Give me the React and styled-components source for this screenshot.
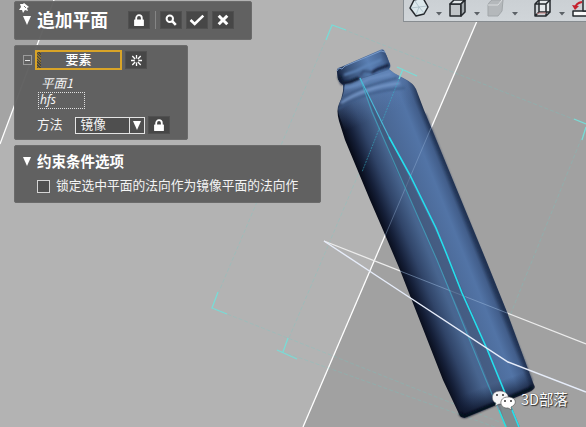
import React from "react";
import styled, { createGlobalStyle } from "styled-components";

const GlobalStyle = createGlobalStyle`
  * { box-sizing: border-box; }
  body {
    margin: 0;
    overflow: hidden;
    font-family: "Noto Sans CJK SC", "Noto Sans", sans-serif;
    color: #f4f4f4;
  }
`;

const Viewport = styled.main`
  position: relative;
  display: flex;
  justify-content: space-between;
  align-items: flex-start;
  width: 586px;
  height: 427px;
  overflow: hidden;
  background: #b3b3b3;
`;

const SceneCanvas = styled.svg`
  position: absolute;
  inset: 0;
  width: 586px;
  height: 427px;
`;

const Dock = styled.div`
  position: relative;
  display: flex;
  flex-direction: column;
  align-items: flex-start;
  gap: 5px;
  padding: 1px 0 0 14px;
`;

const Panel = styled.section`
  position: relative;
  width: ${(p) => p.$w}px;
  height: ${(p) => p.$h}px;
  padding: ${(p) => p.$pad};
  border-radius: 2px;
  border: 1px solid #6b6b6b;
  background: rgba(94, 94, 94, 0.96);
`;

const Row = styled.div`
  display: flex;
  align-items: center;
  height: ${(p) => p.$h}px;
  margin-top: ${(p) => p.$mt || 0}px;
  padding-left: ${(p) => p.$indent || 0}px;
`;

const Title = styled.h1`
  margin: 0 0 0 6px;
  width: 91px;
  padding-bottom: 2px;
  font-size: 17.8px;
  line-height: 22px;
  font-weight: 700;
  white-space: nowrap;
  color: #fff;
`;

const SectionTitle = styled.h2`
  margin: 0 0 0 6px;
  padding-bottom: 1px;
  font-size: 14.5px;
  line-height: 18px;
  font-weight: 700;
  white-space: nowrap;
  color: #fff;
`;

const Arrow = styled.span`
  width: 0;
  height: 0;
  border: ${(p) => p.$half || 4.5}px solid transparent;
  border-top: 9px solid #fff;
  border-bottom: 0;
`;

const ToolButton = styled.button`
  display: grid;
  place-items: center;
  width: 22px;
  height: 18px;
  margin: 0 0 0 ${(p) => p.$ml || 0}px;
  padding: 0;
  border: 1px solid #505050;
  background: #474747;
`;

const Divider = styled.i`
  width: 1px;
  height: 18px;
  margin-left: 5px;
  background: #858585;
`;

const Pin = styled.svg`
  position: absolute;
  left: 4px;
  top: 0;
`;

const Collapse = styled.span`
  display: grid;
  place-items: center;
  width: 9px;
  height: 10px;
  border: 1px solid #9b9b9b;

  &::after {
    content: "";
    width: 5px;
    height: 1px;
    background: #e6e6e6;
  }
`;

const ElementField = styled.button`
  display: flex;
  justify-content: center;
  align-items: flex-start;
  width: 87px;
  height: 20px;
  margin: 0 0 0 3px;
  padding: 0;
  border: 2px solid #d9a427;
  background: linear-gradient(90deg, transparent 4px, #606060 4px),
    repeating-linear-gradient(45deg, #46443f 0 1px, #8a7030 1px 2px);
  color: #fff;
  font: 500 13px/13px "Noto Sans CJK SC", sans-serif;
`;

const PlaneName = styled.span`
  font: italic 400 12.5px/14px "Noto Sans CJK SC", sans-serif;
`;

const NameBox = styled.span`
  width: 47px;
  height: 17px;
  padding-left: 1px;
  border: 1px dotted #e0e0e0;
  font: italic 400 12px/14px "Noto Sans", sans-serif;
`;

const Label = styled.span`
  padding-bottom: 2px;
  font-size: 12.75px;
  line-height: 16px;
  white-space: nowrap;
`;

const Select = styled.div`
  display: flex;
  align-items: center;
  justify-content: space-between;
  width: 70px;
  height: 17px;
  margin-left: 12px;
  padding-left: 5px;
  border: 1px solid #e4e4e4;
  background: #4f4f4f;
`;

const SelectArrow = styled.span`
  display: grid;
  place-items: center;
  width: 15px;
  height: 15px;
  border-left: 1px solid #e4e4e4;
`;

const Checkbox = styled.span`
  width: 13px;
  height: 13px;
  margin-right: 6px;
  border: 1px solid #d5d5d5;
  background: #505050;
`;

const ViewToolbar = styled.nav`
  position: relative;
  width: 183px;
  height: 22px;
  border-left: 1px solid #8b9196;
  border-bottom: 1px solid #878c90;
  background: linear-gradient(#cbd0d4, #d0d5d9);
`;

const Watermark = styled.div`
  position: absolute;
  left: 492px;
  top: 389px;
  display: flex;
  align-items: center;
  gap: 5px;
  height: 24px;
  color: #fff;
  font-size: 14.4px;
  white-space: nowrap;
  text-shadow: 1px 1px 1px #333, 0 0 1px #444;
`;

const WatermarkText = styled.span`
  padding-bottom: 4px;
  line-height: 20px;
`;

const LockIcon = () => (
  <svg width="12" height="13" viewBox="0 0 12 13">
    <path d="M3.2 6V4a2.8 2.8 0 0 1 5.6 0v2" fill="none" stroke="#fff" strokeWidth="1.8" />
    <rect x="1.1" y="5.6" width="9.8" height="6.4" rx=".5" fill="#fff" />
  </svg>
);

const SearchIcon = () => (
  <svg width="12" height="12" viewBox="0 0 12 12" fill="none" stroke="#fff">
    <circle cx="4.8" cy="4.8" r="3.2" strokeWidth="2" />
    <path d="m7.2 7.2 3.6 3.6" strokeWidth="2.6" />
  </svg>
);

const CheckIcon = () => (
  <svg width="16" height="12" viewBox="0 0 16 12">
    <path d="m1.5 6 4.2 4L14.3 1.6" fill="none" stroke="#fff" strokeWidth="2.6" />
  </svg>
);

const CloseIcon = () => (
  <svg width="12" height="12" viewBox="0 0 12 12">
    <path d="m1.7 1.7 8.6 8.6m0-8.6-8.6 8.6" stroke="#fff" strokeWidth="3" />
  </svg>
);

const BurstIcon = () => (
  <svg width="13" height="13" viewBox="0 0 13 13">
    <path d="M6.5 1v3.6m0 3.8V12M1 6.5h3.7m3.6 0H12M2.3 2l2.8 3m2.8 3 2.8 3m0-9L7.9 5M5.1 8l-2.8 3" stroke="#fff" strokeWidth="1.3" />
  </svg>
);

function Scene() {
  return (
    <SceneCanvas viewBox="0 0 586 427" fill="none">
      <defs>
        <linearGradient id="body" gradientUnits="userSpaceOnUse" x1="370" y1="200" x2="447.5" y2="169">
          <stop offset="0" stopColor="#070b18" />
          <stop offset=".1" stopColor="#151f38" />
          <stop offset=".24" stopColor="#304468" />
          <stop offset=".42" stopColor="#48658f" />
          <stop offset=".62" stopColor="#4d6c9b" />
          <stop offset=".8" stopColor="#5274a6" />
          <stop offset=".93" stopColor="#425e8b" />
          <stop offset="1" stopColor="#20314f" />
        </linearGradient>
        <linearGradient id="neck" gradientUnits="userSpaceOnUse" x1="339" y1="78" x2="390" y2="58">
          <stop offset="0" stopColor="#17233f" />
          <stop offset=".2" stopColor="#385178" />
          <stop offset=".6" stopColor="#5a7fb3" />
          <stop offset=".85" stopColor="#4b6b9b" />
          <stop offset="1" stopColor="#2c4166" />
        </linearGradient>
        <linearGradient id="shoulder" gradientUnits="userSpaceOnUse" x1="366" y1="76" x2="382" y2="116">
          <stop offset="0" stopColor="#6a8fc2" stopOpacity=".7" />
          <stop offset="1" stopColor="#5577ac" stopOpacity="0" />
        </linearGradient>
        <linearGradient id="base" gradientUnits="userSpaceOnUse" x1="492" y1="384" x2="499" y2="403">
          <stop offset="0" stopColor="#14213e" stopOpacity="0" />
          <stop offset="1" stopColor="#0b1226" stopOpacity=".85" />
        </linearGradient>
        <filter id="soft" x="-20%" y="-20%" width="140%" height="140%">
          <feGaussianBlur stdDeviation=".9" />
        </filter>
      </defs>

      <path d="M0 0H54L0 144Z" fill="#a4a4a4" />
      <path d="M486 0H586V427H303Z" fill="#a1a1a1" />
      <path d="M54 0 0 144" stroke="#fff" strokeWidth="1.3" />
      <path d="M486 0 303 427" stroke="#fff" strokeWidth="1.3" />

      <path
        d="M332 25 212 308 540 438M332 25 586 124M403 69 283 352 560 450M586 127 484 380"
        stroke="#66cfc7"
        strokeOpacity=".26"
        strokeDasharray="4 2"
      />
      <path d="M324 241 586 344" stroke="#ececec" strokeWidth="1.3" />

      <path d="M337 72Q336 68 341 67L380 50Q384 48 385 52L390 64Q391 67 389 69L394 73 405 79Q413 83 416 89L424 110 486 260 507 312 532 380 534 386Q534 389 529 391L466 417Q461 419 459 414L443 380 400 270 383 230 370 200 345 140 339 121Q336 110 339 104 342 98 343 91L343 85Q339 82 338 79Z" fill="url(#body)" />
      <path d="m345 84 44-14 15 9q9 4 12 10l14 34-75 32-15-37q-4-10 0-16 4-7 5-18Z" fill="url(#shoulder)" />
      <path d="M337 71Q338 68 343 67L383 50Q386 52 390 65L389 69 343 84Q339 82 338 79Z" fill="url(#neck)" />
      <path d="M520 350 535 387Q534 390 529 392L464 418 447 381Z" fill="url(#base)" />
      <g filter="url(#soft)">
        <path d="m339 76 3 7 8-1 9-4" stroke="#0f1a31" strokeWidth="3.2" />
        <path d="m371 73 7-4 11-4" stroke="#14223f" strokeWidth="3" />
        <path d="m360 76 3-5 9 1" stroke="#344c73" strokeWidth="2" />
        <path d="m344 75 12-4 10-5 15-6" stroke="#6187bb" strokeWidth="2" />
        <path d="M344 88Q356 87 369 79L391 74" stroke="#7093c6" strokeWidth="1.6" />
        <path d="M343 97Q363 86 397 78" stroke="#39547f" strokeWidth="1.6" />
        <path d="M341 103Q363 88 400 83" stroke="#7b9dce" strokeWidth="1.8" />
        <path d="M339 109Q361 92 405 88" stroke="#3b5883" strokeWidth="1.4" />
        <path d="M425 114 532 381" stroke="#22365a" strokeWidth="1.4" />
        <path d="m532 386-2 3-64 27q-4 1-6-3" stroke="#060b1a" strokeWidth="3" />
      </g>
      <path d="m337 71 2-3 3 1 3-3 36-15 4 1" stroke="#85a7d5" strokeWidth=".8" />

      <path d="M431 128 385 236" stroke="#9cb9dd" strokeOpacity=".38" />
      <path d="M400 271 507 313" stroke="#9cb9dd" strokeOpacity=".5" />
      <path d="M403 69 362 172" stroke="#36b6cb" strokeOpacity=".55" strokeDasharray="2 1" />
      <path d="m360 78 29 59 19 38 40 81 39 92 33 79h-14l-34-87-48-110-30-65Z" fill="#3b4c66" opacity=".4" />
      <path d="m500 405 9-4 11 26h-14Z" fill="#818c8f" />
      <path d="m360 78 12 34 35 80 30 68 49 120 20 47" stroke="#3fb5cb" strokeOpacity=".62" strokeWidth="1.1" />
      <path d="m360 78 29 59" stroke="#4abcd9" strokeWidth="1.1" />
      <path d="m389 137 21 38 26 53 11 27 15 38 25 56 32 78" stroke="#25dfed" strokeWidth="1.6" />
      <path d="m499 410 7 17" stroke="#2be0de" strokeWidth="1.5" />
      <path d="M324 241 380 278 508 362 586 392" stroke="#e7edfa" strokeWidth="1.4" />
      <path
        d="m326 40 6-15 14 5M218 292l-6 16 15 6M288 338l-5 14M277 350l20 9M397 67l20 9M403 69l-4 10M574 119l12 5M586 127l-4 13"
        stroke="#7adbd6"
        strokeWidth="1.3"
      />
    </SceneCanvas>
  );
}

const ViewIcons = () => (
  <svg width="182" height="21" viewBox="404 0 182 21" fill="none" stroke="#25292d" strokeWidth="1.5" strokeLinejoin="round">
    <path d="m414 0 9-2 5 9-4 7-8 2-6-8Z" fill="#dce8ec" />
    <path d="m415 1 4 6 8-1m-8 1-3 8m3-8-8 1m8-1 5 6" stroke="#a9bdc5" strokeWidth=".8" />
    <path d="M450 4h11v12h-11Z" fill="#c0c4c7" />
    <path d="m450 4 4-4h11l-4 4Z" fill="#e2e6e8" />
    <path d="M461 4v12l4-4V0Z" fill="#a3a9ad" />
    <path d="M488 5q0-2 4-5h11l-1 11-4 5h-10Z" fill="#b4b8bb" stroke="#a1a6a9" strokeWidth="1" />
    <path d="M488 5h10l4-5" stroke="#d9dcde" strokeWidth="1" />
    <path d="M539 0h11v12h-11Z" fill="#e6e9eb" />
    <path d="M535 4h11v12h-11ZM535 4l4-4m7 4 4-4m-15 16 4-4m7 4 4-4" />
    <path d="m537 14 2-1h7" stroke="#cf8b8b" strokeWidth="1" />
    <path d="M573 11h17v5h-17Z" fill="#f9f9f9" />
    <path d="M583-1h5v12h-5Z" fill="#dce1e4" />
    <path d="M575 8q1-5 7-6" stroke="#c5222e" strokeWidth="2" />
    <path d="m572 5 3 5 4-4Z" fill="#c5222e" stroke="none" />
    <path d="M436 12h6l-3 3.5ZM474 12h6l-3 3.5ZM512 12h6l-3 3.5ZM559 12h6l-3 3.5Z" fill="#5c6267" stroke="none" />
  </svg>
);

export default function App() {
  return (
    <>
      <GlobalStyle />
      <Viewport>
        <Scene />
        <Dock>
          <Panel $w={238} $h={39} $pad="6px 0 0 8px">
            <Pin width="12" height="13" viewBox="0 0 12 13">
              <path d="m5 1 5 4-2 1 1 3-3-1-2 3-1-3-3 0 2-3-1-3 3 0Z" fill="#fff" />
              <path d="m5 4 2 2" stroke="#777" />
            </Pin>
            <Row $h={24}>
              <Arrow />
              <Title>追加平面</Title>
              <ToolButton aria-label="锁定"><LockIcon /></ToolButton>
              <Divider />
              <ToolButton aria-label="查找" $ml={4}><SearchIcon /></ToolButton>
              <ToolButton aria-label="确定" $ml={4}><CheckIcon /></ToolButton>
              <ToolButton aria-label="取消" $ml={4}><CloseIcon /></ToolButton>
            </Row>
          </Panel>
          <Panel $w={174} $h={95} $pad="4px 0 0 8px">
            <Row $h={20}>
              <Collapse />
              <ElementField>要素</ElementField>
              <ToolButton aria-label="选择" $ml={3}><BurstIcon /></ToolButton>
            </Row>
            <Row $h={14} $mt={6} $indent={18}><PlaneName>平面1</PlaneName></Row>
            <Row $h={17} $mt={2} $indent={15}><NameBox>hfs</NameBox></Row>
            <Row $h={18} $mt={7} $indent={14}>
              <Label>方法</Label>
              <Select>
                <Label>镜像</Label>
                <SelectArrow><Arrow $half={4} /></SelectArrow>
              </Select>
              <ToolButton aria-label="锁定方法" $ml={3}><LockIcon /></ToolButton>
            </Row>
          </Panel>
          <Panel $w={307} $h={58} $pad="5px 0 0 8px">
            <Row $h={20}>
              <Arrow />
              <SectionTitle>约束条件选项</SectionTitle>
            </Row>
            <Row $h={18} $mt={6} $indent={14}>
              <Checkbox />
              <Label>锁定选中平面的法向作为镜像平面的法向作</Label>
            </Row>
          </Panel>
        </Dock>
        <ViewToolbar><ViewIcons /></ViewToolbar>
        <Watermark>
          <svg width="24" height="22" viewBox="0 0 24 22">
            <path d="M8 1C-2 1-1 12 4 13l-1 3 4-2c13 1 12-13 1-13" fill="#f5f5f5" stroke="#555" strokeWidth=".5" />
            <path d="M16 7C6 7 7 19 16 18l4 2-1-3c7-3 5-10-3-10" fill="#fff" stroke="#555" strokeWidth=".7" />
            <g fill="#333">
              <circle cx="5" cy="5" r="1" />
              <circle cx="11" cy="5" r="1" />
              <circle cx="13" cy="11" r="1" />
              <circle cx="19" cy="11" r="1" />
            </g>
          </svg>
          <WatermarkText>3D部落</WatermarkText>
        </Watermark>
      </Viewport>
    </>
  );
}
